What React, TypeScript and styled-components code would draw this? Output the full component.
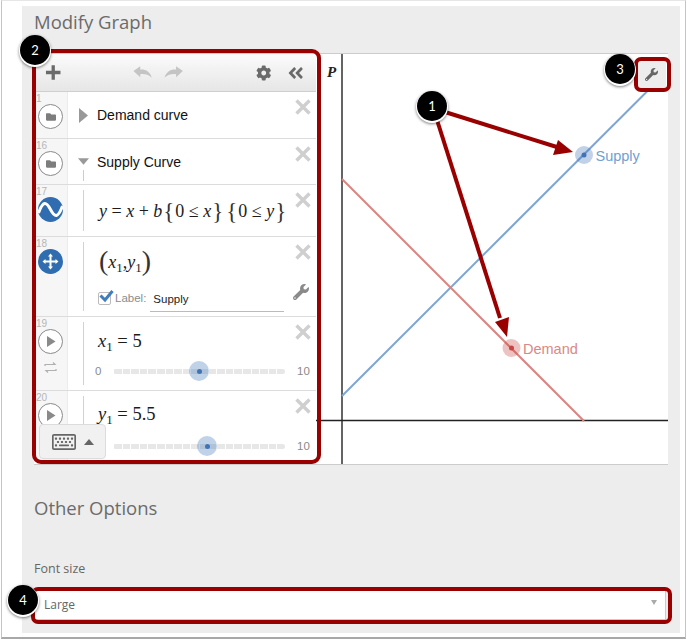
import React from "react";
import styled, { createGlobalStyle } from "styled-components";
import { FaCog, FaWrench, FaFolder, FaRegKeyboard, FaAngleDoubleLeft } from "react-icons/fa";

const Global = createGlobalStyle`
  html, body { margin: 0; padding: 0; background: #fff; }
  body { font-family: "Open Sans", sans-serif; }
  * { box-sizing: border-box; }
`;

const Page = styled.div`
  position: relative;
  width: 687px;
  height: 642px;
  overflow: hidden;
  background: #fff;
`;
const Frame = styled.div`
  width: 685px;
  height: 639px;
  margin-left: 1px;
  padding: 5px 5px 5px 20px;
  border: 1px solid #c4c4c4;
  border-top-color: #e6e6e6;
  border-bottom: 2px solid #a8a8a8;
  background: #fff;
`;
const Panel = styled.div`
  width: 658px;
  height: 627px;
  padding: 0 12px;
  background: #ededed;
`;
const Title = styled.h2<{ $top: number }>`
  margin: 0;
  padding-top: ${(p) => p.$top}px;
  height: ${(p) => p.$top + 24}px;
  font: 400 18.5px/24px "Open Sans", sans-serif;
  color: #6b6b6b;
`;
const Calculator = styled.div`
  display: flex;
  height: 412px;
  margin-top: 19px;
  background: #fff;
  border-top: 1px solid #ccc;
  border-bottom: 1px solid #ccc;
`;
const ExprPane = styled.div`
  position: relative;
  width: 282px;
  flex: none;
  overflow: hidden;
  display: flex;
  flex-direction: column;
`;
const Toolbar = styled.div`
  display: flex;
  align-items: center;
  height: 38px;
  flex: none;
  padding: 0 12px 0 11px;
  background: linear-gradient(#fbfbfb, #e6e6e6);
  border-bottom: 1px solid #cfcfcf;
  color: #6a6a6a;
`;
const ToolSpacer = styled.div<{ $w: number }>`
  width: ${(p) => p.$w}px;
  flex: none;
`;
const Row = styled.div<{ $h: number }>`
  position: relative;
  display: flex;
  height: ${(p) => p.$h}px;
  flex: none;
  border-bottom: 1px solid #dcdcdc;
`;
const Gutter = styled.div`
  width: 34px;
  flex: none;
  padding-top: 3px;
  background: #f6f6f6;
  border-right: 1px solid #ececec;
  display: flex;
  flex-direction: column;
  align-items: center;
`;
const RowNum = styled.span`
  align-self: flex-start;
  height: 8px;
  margin-left: 2px;
  font: 10px/8px "Liberation Sans", sans-serif;
  color: #b5b5b5;
`;
const IconCircle = styled.div<{ $fill?: boolean }>`
  width: 25px;
  height: 25px;
  flex: none;
  border-radius: 50%;
  display: flex;
  align-items: center;
  justify-content: center;
  margin-top: 1px;
  color: ${(p) => (p.$fill ? "#fff" : "#777")};
  background: ${(p) => (p.$fill ? "#2f6cb0" : "#fff")};
  border: ${(p) => (p.$fill ? "none" : "1px solid #8a8a8a")};
`;
const LoopIcon = styled.svg`
  margin-top: 8px;
`;
const FolderBody = styled.div`
  flex: 1;
  display: flex;
  align-items: center;
  gap: 8px;
  padding: 0 0 0 10px;
  font: 14px/18px "Liberation Sans", sans-serif;
  color: #111;
`;
const TriWrap = styled.div`
  position: relative;
  width: 11px;
  height: 14px;
  flex: none;
  display: flex;
  align-items: center;
  justify-content: center;
`;
const Stem = styled.i`
  position: absolute;
  left: 5px;
  top: 15px;
  width: 1px;
  height: 11px;
  background: #ccc;
`;
const Nested = styled.div`
  flex: 1;
  min-width: 0;
  margin: 5px 0 5px 15px;
  padding: 0 0 0 15px;
  border-left: 1px solid #d2d2d2;
  display: flex;
  flex-direction: column;
`;
const Math = styled.div<{ $size: number; $mt: number; $ml?: number }>`
  margin-top: ${(p) => p.$mt}px;
  margin-left: ${(p) => p.$ml ?? 0}px;
  font: ${(p) => p.$size}px/26px "Liberation Serif", "DejaVu Serif", serif;
  color: #1c1c1c;
  white-space: nowrap;
  i { font-style: italic; }
  sub { font-size: 13px; line-height: 0; vertical-align: -4px; }
`;
const Brace = styled.span<{ $s: number; $l?: number; $r?: number }>`
  padding-left: ${(p) => p.$l ?? 0}px;
  padding-right: ${(p) => p.$r ?? 0}px;
  font-size: ${(p) => p.$s}px;
  font-weight: 300;
  line-height: 0;
  vertical-align: -2px;
  color: #333;
`;
const LabelRow = styled.div`
  display: flex;
  align-items: center;
  margin-top: 11px;
  margin-left: -1px;
  height: 26px;
`;
const Check = styled.div`
  position: relative;
  width: 13px;
  height: 13px;
  flex: none;
  margin-bottom: 2px;
  border: 1px solid #bbb;
  border-radius: 2px;
  background: #fff;
  svg { position: absolute; left: 0; top: -4px; }
`;
const LabelText = styled.span`
  margin: 0 0 2px 4px;
  font: 11.5px/14px "Liberation Sans", sans-serif;
  color: #8c8c8c;
`;
const LabelInput = styled.div`
  width: 134px;
  height: 26px;
  margin-left: 4px;
  padding: 5px 0 0 3px;
  border-bottom: 1px solid #bbb;
  font: 11.5px/16px "Liberation Sans", sans-serif;
  color: #222;
`;
const SliderRow = styled.div<{ $mt: number }>`
  display: flex;
  align-items: center;
  height: 20px;
  margin-top: ${(p) => p.$mt}px;
  margin-left: -4px;
  font: 11.5px/14px "Liberation Sans", sans-serif;
  color: #8a8a8a;
`;
const SliderMin = styled.span`
  width: 18px;
  flex: none;
`;
const Track = styled.div`
  position: relative;
  width: 172px;
  height: 5px;
  flex: none;
  border-radius: 3px;
  background: #e7e7e7
    repeating-linear-gradient(90deg, #fff 0 1px, transparent 1px 8.6px);
  background-position: 0 0;
`;
const Thumb = styled.div`
  position: absolute;
  top: 50%;
  width: 20px;
  height: 20px;
  margin: -10px 0 0 -10px;
  border-radius: 50%;
  background: rgba(60, 115, 185, 0.32);
  &::after {
    content: "";
    position: absolute;
    left: 7.5px;
    top: 7.5px;
    width: 5px;
    height: 5px;
    border-radius: 50%;
    background: #3f74b8;
  }
`;
const SliderMax = styled.span`
  margin-left: 12px;
`;
const Delete = styled.svg`
  position: absolute;
  right: 5px;
  top: 7px;
`;
const RowWrench = styled.div`
  position: absolute;
  right: 7px;
  top: 47px;
  color: #8a8a8a;
  font-size: 16px;
  line-height: 0;
`;
const KeyboardBtn = styled.div`
  position: absolute;
  left: 5px;
  bottom: 5px;
  width: 67px;
  height: 35px;
  display: flex;
  align-items: center;
  justify-content: center;
  gap: 8px;
  background: #f1f1f1;
  border: 1px solid #dcdcdc;
  border-radius: 4px;
  color: #666;
`;
const Caret = styled.i`
  width: 0;
  height: 0;
  border-left: 5.5px solid transparent;
  border-right: 5.5px solid transparent;
  border-bottom: 6px solid #666;
`;
const GraphPane = styled.div`
  position: relative;
  flex: 1;
  background: #fff;
`;
const GraphSvg = styled.svg`
  display: block;
`;
const WrenchBtn = styled.div`
  position: absolute;
  left: 321px;
  top: 7px;
  width: 29px;
  height: 27px;
  display: flex;
  align-items: center;
  justify-content: center;
  background: #ededed;
  color: #666;
  font-size: 13px;
`;
const FieldLabel = styled.div`
  margin-top: 40px;
  font: 12.5px/18px "Open Sans", sans-serif;
  color: #666;
`;
const SelectBox = styled.div`
  display: flex;
  align-items: center;
  justify-content: space-between;
  width: 634px;
  height: 30px;
  margin: 12px 0 0 -2px;
  padding: 0 8px 0 11px;
  background: #fff;
  border: 1px solid #ccc;
  font: 12px/16px "Open Sans", sans-serif;
  color: #666;
`;
const SelectCaret = styled.i`
  width: 0;
  height: 0;
  margin-bottom: 5px;
  border-left: 3.5px solid transparent;
  border-right: 3.5px solid transparent;
  border-top: 5px solid #aaa;
`;
const Callout = styled.div<{ $x: number; $y: number; $w: number; $h: number; $r: number }>`
  position: absolute;
  left: ${(p) => p.$x}px;
  top: ${(p) => p.$y}px;
  width: ${(p) => p.$w}px;
  height: ${(p) => p.$h}px;
  border: 4px solid #990000;
  border-radius: ${(p) => p.$r}px;
  pointer-events: none;
`;
const Badge = styled.div<{ $x: number; $y: number }>`
  position: absolute;
  left: ${(p) => p.$x - 15}px;
  top: ${(p) => p.$y - 15}px;
  width: 30px;
  height: 30px;
  display: flex;
  align-items: center;
  justify-content: center;
  border-radius: 50%;
  background: #000;
  box-shadow: 0 1px 0 1px #fff, 0 2px 3px 1px rgba(0, 0, 0, 0.5);
  font: 13px/16px "Lato", sans-serif;
  color: #fff;
`;
const Arrows = styled.svg`
  position: absolute;
  left: 0;
  top: 0;
  pointer-events: none;
`;

const X = () => (
  <Delete width="16" height="16" viewBox="0 0 16 16">
    <path d="M1.5 1.5 14.5 14.5M14.5 1.5 1.5 14.5" stroke="#cfcfcf" strokeWidth="3.4" />
  </Delete>
);
const Play = () => (
  <IconCircle>
    <svg width="10" height="11" viewBox="0 0 10 11"><path d="M1 0 9.5 5.5 1 11z" fill="#8a8a8a" /></svg>
  </IconCircle>
);
const FolderIcon = () => (
  <IconCircle>
    <FaFolder size={10} color="#7d7d7d" />
  </IconCircle>
);
const ArrowUndo = ({ flip }: { flip?: boolean }) => (
  <svg width="20" height="13" viewBox="0 0 20 13" style={flip ? { transform: "scaleX(-1)" } : undefined}>
    <path d="M0.5 5 7.500 0V3.500C13 3 17.500 5.500 19.500 12 16 8.500 12 7.800 7.500 8.200V11.500z" fill="#c4c4c4" />
  </svg>
);
const Slider = ({ pos, min, mt }: { pos: number; min?: boolean; mt: number }) => (
  <SliderRow $mt={mt}>
    <SliderMin>{min ? "0" : ""}</SliderMin>
    <Track>
      <Thumb style={{ left: `${pos}px` }} />
    </Track>
    <SliderMax>10</SliderMax>
  </SliderRow>
);

export default function App() {
  return (
    <Page>
      <Global />
      <Frame>
        <Panel>
          <Title $top={4}>Modify Graph</Title>
          <Calculator>
            <ExprPane>
              <Toolbar>
                <svg width="17" height="17" viewBox="0 0 17 17">
                  <path d="M8.5 1v15M1 8.5h15" stroke="#6a6a6a" strokeWidth="3.4" />
                </svg>
                <ToolSpacer $w={72} />
                <ArrowUndo />
                <ToolSpacer $w={11} />
                <ArrowUndo flip />
                <ToolSpacer $w={73} />
                <FaCog size={16} />
                <ToolSpacer $w={15} />
                <FaAngleDoubleLeft size={18} />
              </Toolbar>
              <Row $h={47}>
                <Gutter><RowNum>1</RowNum><FolderIcon /></Gutter>
                <FolderBody>
                  <TriWrap>
                    <svg width="9" height="15" viewBox="0 0 9 15"><path d="M0 0 9 7.5 0 15z" fill="#999" /></svg>
                  </TriWrap>
                  Demand curve
                </FolderBody>
                <X />
              </Row>
              <Row $h={46}>
                <Gutter><RowNum>16</RowNum><FolderIcon /></Gutter>
                <FolderBody>
                  <TriWrap>
                    <svg width="15" height="9" viewBox="0 0 15 9"><path d="M0 0H15L7.5 9z" fill="#999" /></svg>
                    <Stem />
                  </TriWrap>
                  Supply Curve
                </FolderBody>
                <X />
              </Row>
              <Row $h={52}>
                <Gutter>
                  <RowNum>17</RowNum>
                  <IconCircle $fill>
                    <svg width="25" height="25" viewBox="0 0 25 25">
                      <path d="M0.5 16C5 4 8 4 12.5 12.5S20 21 24.5 9" fill="none" stroke="#fff" strokeWidth="3" />
                    </svg>
                  </IconCircle>
                </Gutter>
                <Nested>
                  <Math $size={18} $mt={8}>
                    <i>y</i> = <i>x</i> + <i>b</i>
                    <Brace $s={23} $l={1} $r={1}>{"{"}</Brace>0 ≤ <i>x</i><Brace $s={23} $l={1}>{"}"}</Brace>
                    <Brace $s={23} $l={3} $r={1}>{"{"}</Brace>0 ≤ <i>y</i><Brace $s={23} $l={1}>{"}"}</Brace>
                  </Math>
                </Nested>
                <X />
              </Row>
              <Row $h={80}>
                <Gutter>
                  <RowNum>18</RowNum>
                  <IconCircle $fill>
                    <svg width="17" height="17" viewBox="0 0 17 17">
                      <path d="M8.5 0.5 11 3.5H9.5V7.5H13.5V6L16.5 8.5 13.5 11V9.500H9.500V13.500H11L8.5 16.500 6 13.500H7.500V9.500H3.500V11L0.500 8.500 3.500 6V7.500H7.500V3.500H6z" fill="#fff" />
                    </svg>
                  </IconCircle>
                </Gutter>
                <Nested>
                  <Math $size={18} $mt={7}>
                    <Brace $s={28}>(</Brace><i>x</i><sub>1</sub>,<i>y</i><sub>1</sub><Brace $s={28}>)</Brace>
                  </Math>
                  <LabelRow>
                    <Check>
                      <svg width="15" height="15" viewBox="0 0 15 15">
                        <path d="M1.500 6.500 6 11 13.500 2" fill="none" stroke="#3f7cc0" strokeWidth="3" />
                      </svg>
                    </Check>
                    <LabelText>Label:</LabelText>
                    <LabelInput>Supply</LabelInput>
                  </LabelRow>
                </Nested>
                <X />
                <RowWrench><FaWrench /></RowWrench>
              </Row>
              <Row $h={74}>
                <Gutter>
                  <RowNum>19</RowNum>
                  <Play />
                  <LoopIcon width="13" height="11" viewBox="0 0 13 11">
                    <path d="M1 4V2.500H11L9 .5M12 7V8.500H2L4 10.500" fill="none" stroke="#b0b0b0" strokeWidth="1.200" />
                  </LoopIcon>
                </Gutter>
                <Nested>
                  <Math $size={18.5} $mt={6} $ml={-1}>
                    <i>x</i><sub>1</sub> = 5
                  </Math>
                  <Slider pos={86} min mt={7} />
                </Nested>
                <X />
              </Row>
              <Row $h={70}>
                <Gutter>
                  <RowNum>20</RowNum>
                  <Play />
                </Gutter>
                <Nested>
                  <Math $size={18.5} $mt={5} $ml={-1}>
                    <i>y</i><sub>1</sub> = 5.5
                  </Math>
                  <Slider pos={94} mt={10} />
                </Nested>
                <X />
              </Row>
              <KeyboardBtn>
                <FaRegKeyboard size={24} />
                <Caret />
              </KeyboardBtn>
            </ExprPane>
            <GraphPane>
              <GraphSvg width="352" height="410" viewBox="316 54 352 410">
                <path d="M342 54V464" stroke="#111" strokeWidth="1.300" />
                <path d="M316 420.500H668" stroke="#222" strokeWidth="1.300" />
                <path d="M342 396 650 88.500" stroke="#7fa6d2" strokeWidth="2" />
                <path d="M342 179 584 421" stroke="#d98580" strokeWidth="2" />
                <circle cx="584" cy="155" r="9" fill="#3f74b8" opacity=".32" />
                <circle cx="584" cy="155" r="2.500" fill="#3f74b8" />
                <circle cx="511.500" cy="348" r="9" fill="#c74440" opacity=".32" />
                <circle cx="511.500" cy="348" r="2.500" fill="#c74440" />
                <text x="595.500" y="160.500" fontFamily="Liberation Sans" fontSize="14.500" fill="#6f9fd3">Supply</text>
                <text x="523" y="353.500" fontFamily="Liberation Sans" fontSize="14.500" fill="#d98985">Demand</text>
                <text x="327" y="77" fontFamily="Liberation Serif" fontStyle="italic" fontWeight="700" fontSize="15" fill="#222">P</text>
              </GraphSvg>
              <WrenchBtn><FaWrench /></WrenchBtn>
            </GraphPane>
          </Calculator>
          <Title $top={31}>Other Options</Title>
          <FieldLabel>Font size</FieldLabel>
          <SelectBox>
            Large
            <SelectCaret />
          </SelectBox>
        </Panel>
      </Frame>
      <Callout $x={32} $y={49} $w={289} $h={415} $r={9} />
      <Callout $x={634} $y={57} $w={37} $h={35} $r={7} />
      <Callout $x={31} $y={587} $w={641} $h={37} $r={7} />
      <Arrows width="687" height="642" viewBox="0 0 687 642">
        <path d="M445 112 560 148" stroke="#990000" strokeWidth="4" />
        <path d="M573 152 553 155 558 140z" fill="#990000" />
        <path d="M437 120 500 318" stroke="#990000" strokeWidth="4" />
        <path d="M507 337 495 322 509 317z" fill="#990000" />
      </Arrows>
      <Badge $x={432} $y={106}>1</Badge>
      <Badge $x={35} $y={50}>2</Badge>
      <Badge $x={620} $y={69}>3</Badge>
      <Badge $x={23} $y={600}>4</Badge>
    </Page>
  );
}
